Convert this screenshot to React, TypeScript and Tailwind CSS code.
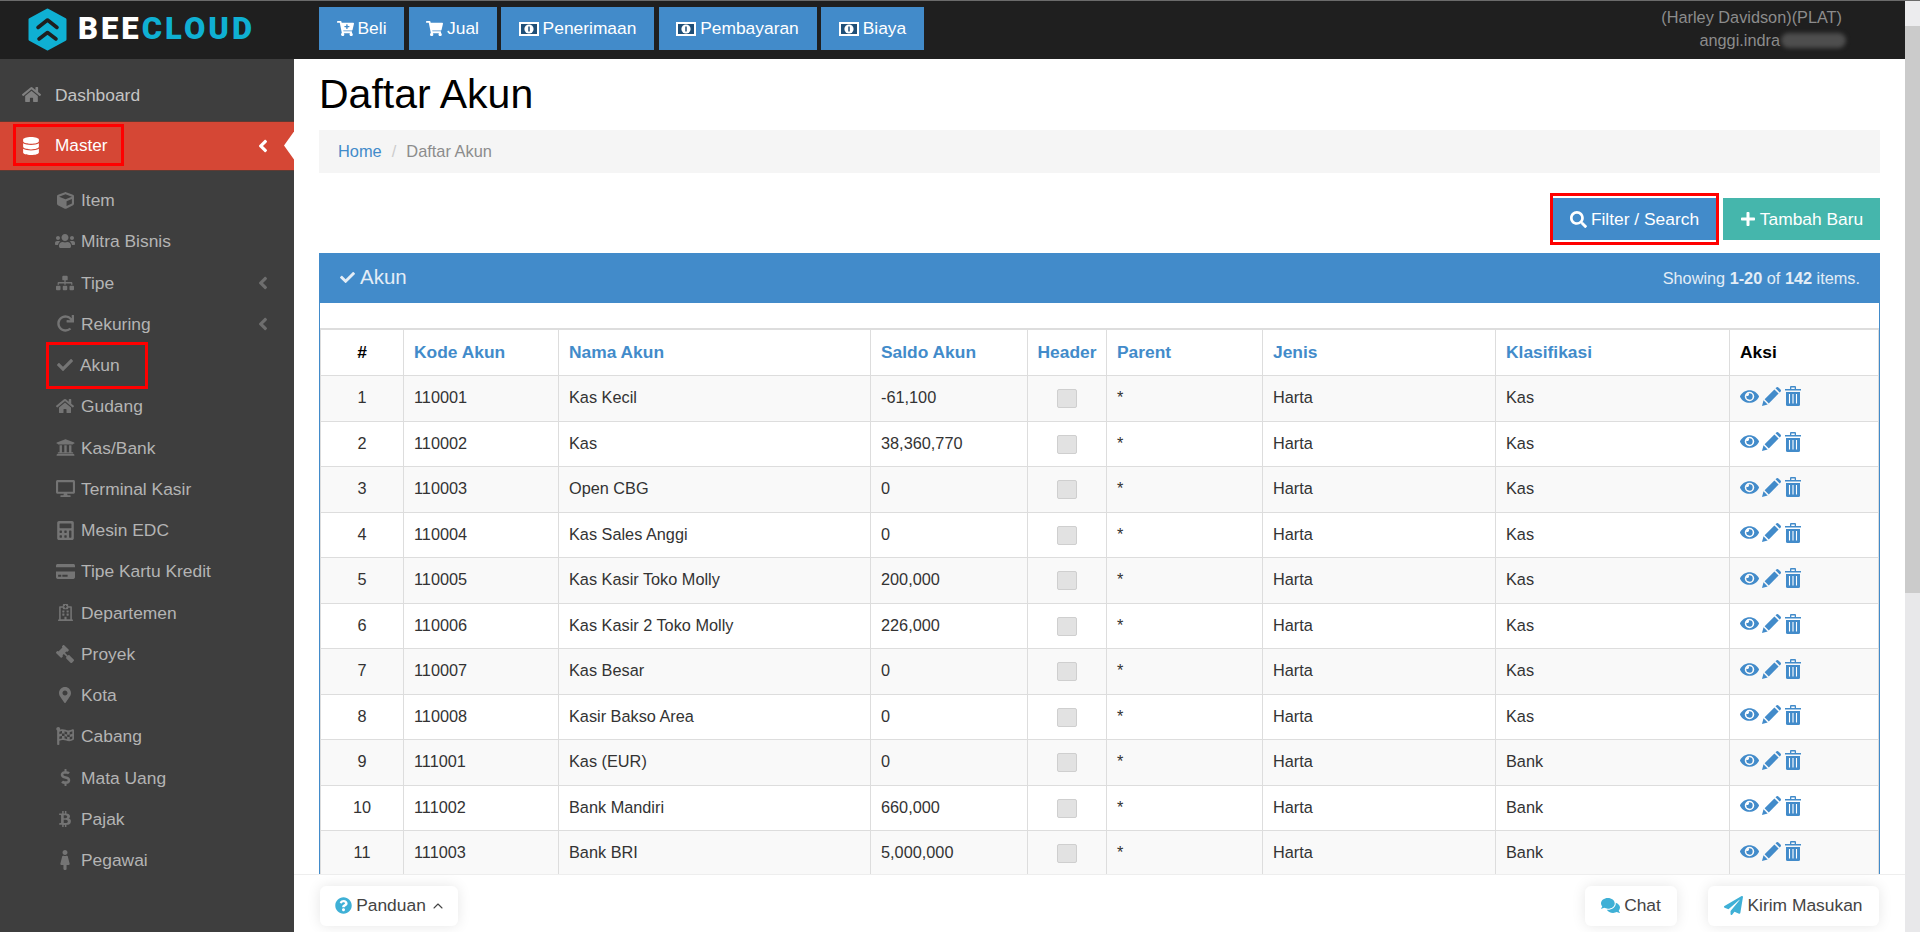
import React from "react";
import {
  FaHome, FaDatabase, FaCube, FaUsers, FaSitemap, FaRedo, FaCheck, FaUniversity, FaDesktop, FaCalculator,
  FaCreditCard, FaRegHospital, FaGavel, FaMapMarkerAlt, FaFlagCheckered, FaDollarSign, FaBtc, FaFemale,
  FaEye, FaCartPlus, FaShoppingCart, FaSearch, FaPlus, FaQuestionCircle,
  FaComments, FaPaperPlane, FaAngleLeft,
} from "react-icons/fa";
import { ChevronUp } from "lucide-react";

const Logo = () => (
  <svg width="39" height="43" viewBox="0 0 39 43" className="shrink-0">
    <path d="M19.5 2 L37 11.5 V31.5 L19.5 41 L2 31.5 V11.5 Z" fill="#0fb0d3" stroke="#0fb0d3" strokeWidth="3" strokeLinejoin="round" />
    <path d="M10 19.5 L19.5 12 L29 19.5" fill="none" stroke="#1f1f1f" strokeWidth="3.6" strokeLinecap="round" strokeLinejoin="round" />
    <path d="M11 31 L19.5 24.5 L28 31" fill="none" stroke="#1f1f1f" strokeWidth="3.6" strokeLinecap="round" strokeLinejoin="round" />
  </svg>
);

const Trash = () => (
  <svg width="16" height="20" viewBox="0 0 16 20">
    <path d="M0 3h5V1a1 1 0 0 1 1-1h4a1 1 0 0 1 1 1v2h5v1.6H0zM6.3 3h3.4V1.4H6.3z" fill="#428bca" fillRule="evenodd" />
    <path d="M1 6h14v12.5a1.5 1.5 0 0 1-1.5 1.5h-11A1.5 1.5 0 0 1 1 18.5z" fill="#428bca" />
    <path d="M4.5 8v9.5M8 8v9.5M11.500 8v9.5" stroke="#fff" strokeWidth="1.1" />
  </svg>
);

const Pencil = () => (
  <svg width="19" height="19" viewBox="0 0 19 19" fill="#428bca">
    <path d="M0 19 L1.5 13.300 L5.700 17.500 Z" />
    <path d="M2.600 12.200 L12.400 2.400 L16.600 6.600 L6.800 16.400 Z" />
    <path d="M13.500 1.300 L14.300 0.500 a1.500 1.500 0 0 1 2.100 0 L18.500 2.600 a1.500 1.500 0 0 1 0 2.100 L17.700 5.500 Z" />
  </svg>
);

const Money = () => (
  <svg width="20" height="14" viewBox="0 0 20 14" className="shrink-0">
    <rect x="1" y="1" width="18" height="12" fill="#428bca" stroke="#fff" strokeWidth="2" />
    <rect x="2" y="2" width="16" height="10" fill="#1f4f78" />
    <circle cx="10" cy="7" r="4.600" fill="#fff" />
    <path d="M10 4.500v5" stroke="#1f4f78" strokeWidth="1.500" />
  </svg>
);

const topButtons = [
  { label: "Beli", w: "w-[85px]", icon: <FaCartPlus size={17} /> },
  { label: "Jual", w: "w-[88px]", icon: <FaShoppingCart size={17} /> },
  { label: "Penerimaan", w: "w-[153px]", icon: <Money /> },
  { label: "Pembayaran", w: "w-[158px]", icon: <Money /> },
  { label: "Biaya", w: "w-[103px]", icon: <Money /> },
];

const subItems: { label: string; icon: React.ReactNode; chevron?: boolean; boxed?: boolean }[] = [
  { label: "Item", icon: <FaCube size={17} /> },
  { label: "Mitra Bisnis", icon: <FaUsers size={20} /> },
  { label: "Tipe", chevron: true, icon: <FaSitemap size={18} /> },
  { label: "Rekuring", chevron: true, icon: <FaRedo size={17} /> },
  { label: "Akun", boxed: true, icon: <FaCheck size={16} /> },
  { label: "Gudang", icon: <FaHome size={18} /> },
  { label: "Kas/Bank", icon: <FaUniversity size={19} /> },
  { label: "Terminal Kasir", icon: <FaDesktop size={19} /> },
  { label: "Mesin EDC", icon: <FaCalculator size={19} /> },
  { label: "Tipe Kartu Kredit", icon: <FaCreditCard size={19} /> },
  { label: "Departemen", icon: <FaRegHospital size={17} /> },
  { label: "Proyek", icon: <FaGavel size={18} className="-scale-x-100" /> },
  { label: "Kota", icon: <FaMapMarkerAlt size={16} /> },
  { label: "Cabang", icon: <FaFlagCheckered size={18} /> },
  { label: "Mata Uang", icon: <FaDollarSign size={17} /> },
  { label: "Pajak", icon: <FaBtc size={16} /> },
  { label: "Pegawai", icon: <FaFemale size={20} /> },
];

const rows = [
  ["1", "110001", "Kas Kecil", "-61,100", "Kas"],
  ["2", "110002", "Kas", "38,360,770", "Kas"],
  ["3", "110003", "Open CBG", "0", "Kas"],
  ["4", "110004", "Kas Sales Anggi", "0", "Kas"],
  ["5", "110005", "Kas Kasir Toko Molly", "200,000", "Kas"],
  ["6", "110006", "Kas Kasir 2 Toko Molly", "226,000", "Kas"],
  ["7", "110007", "Kas Besar", "0", "Kas"],
  ["8", "110008", "Kasir Bakso Area", "0", "Kas"],
  ["9", "111001", "Kas (EUR)", "0", "Bank"],
  ["10", "111002", "Bank Mandiri", "660,000", "Bank"],
  ["11", "111003", "Bank BRI", "5,000,000", "Bank"],
];

const th = "border border-[#ddd] border-t-2 px-[10px] text-left text-[17.4px] font-bold text-[#428bca] h-[46.5px]";
const td = "border border-[#ddd] px-[10px] pb-[2px] h-[45.5px] text-[16.3px] text-[#333]";

export default function App() {
  return (
    <div className="flex h-screen w-full flex-col overflow-hidden bg-white font-['Liberation_Sans',Arial,sans-serif]">
      <div className="h-px shrink-0 bg-[#6b6b6b]" />
      <div className="flex min-h-0 flex-1">
        <div className="flex min-w-0 flex-1 flex-col">
          {/* Header */}
          <header className="flex h-[58px] shrink-0 bg-[#1f1f1f]">
            <div className="flex w-[294px] shrink-0 items-start gap-[11px] pl-[28px] pt-[7px]">
              <Logo />
              <span className="mt-[3px] text-[31px] leading-[36px] font-black tracking-[3px] font-['Roboto',sans-serif]">
                <span className="text-white">BEE</span>
                <span className="text-[#0fb0d3]">CLOUD</span>
              </span>
            </div>
            <div className="ml-[25px] mt-[6px] flex h-[43px] gap-[4.500px]">
              {topButtons.map((b) => (
                <button key={b.label} className={`flex items-center justify-center gap-[4px] bg-[#428bca] text-[17.4px] text-white ${b.w}`}>
                  {b.icon}
                  {b.label}
                </button>
              ))}
            </div>
            <div className="ml-auto pr-[63px] pt-[5px] text-right text-[16.3px] leading-[23px] text-[#8c8c8c]">
              <div>(Harley Davidson)(PLAT)</div>
              <div className="flex items-center justify-end">
                anggi.indra
                <span className="-mr-[4px] ml-[1px] h-[15px] w-[65px] rounded-full bg-[#4e4e4e] blur-[2px]" />
              </div>
            </div>
          </header>

          <div className="flex min-h-0 flex-1">
            {/* Sidebar */}
            <aside className="w-[294px] shrink-0 bg-[#3e3e3e] pt-[11px]">
              <div className="flex h-[50.5px] items-center pb-[1px] text-[17.400px] text-[#c4c4c4]">
                <span className="flex w-[55px] justify-start pl-[22px] text-[#808080]"><FaHome size={19} /></span>
                Dashboard
              </div>
              <div className="relative flex h-[50px] items-center border-y border-[#5f3a32] bg-[#d54735] text-[17.2px] text-white">
                <span className="flex w-[55px] justify-start pl-[22px]"><FaDatabase size={18} /></span>
                Master
                <FaAngleLeft size={20} className="absolute left-[253px] top-[14px]" />
                <div className="absolute right-0 top-[10px] h-[28px] w-[10px] bg-white [clip-path:polygon(100%_0,100%_100%,0_50%)]" />
                <div className="absolute left-[13px] top-[2px] h-[42px] w-[111px] border-[3px] border-[#ff0000]" />
              </div>
              <ul className="pt-[9px]">
                {subItems.map((it) => (
                  <li key={it.label} className="relative flex h-[41.25px] items-center text-[17.4px] text-[#b4b4b4]">
                    <span className="flex w-[81px] justify-start pl-[53px] text-[#747474]">
                      <span className="flex w-[24px] shrink-0 justify-center">{it.icon}</span>
                    </span>
                    <span className={it.boxed ? "-ml-[1px]" : ""}>{it.label}</span>
                    {it.chevron && <FaAngleLeft size={20} className="absolute left-[253px] top-[11px] text-[#6e6e6e]" />}
                    {it.boxed && <div className="absolute left-[46px] top-[-3px] h-[47px] w-[102px] border-[3px] border-[#ff0000]" />}
                  </li>
                ))}
              </ul>
            </aside>

            {/* Main */}
            <main className="flex min-w-0 flex-1 flex-col">
              <div className="min-h-0 flex-1 overflow-hidden px-[25px]">
                <h1 className="flex h-[71px] items-center text-[41px] font-normal text-black">Daftar Akun</h1>
                <nav className="flex h-[43px] items-center gap-[10px] bg-[#f5f5f5] px-[19px] text-[16.4px]">
                  <span className="text-[#428bca]">Home</span>
                  <span className="text-[#ccc]">/</span>
                  <span className="text-[#8c8c8c]">Daftar Akun</span>
                </nav>
                <div className="mt-[25px] flex justify-end gap-[7px]">
                  <button className="relative flex h-[42px] w-[163px] items-center justify-center gap-[4px] bg-[#428bca] text-[17.4px] text-white">
                    <FaSearch size={17} />
                    Filter / Search
                    <span className="absolute -inset-x-[3px] -inset-y-[5px] border-[3px] border-[#ff0000]" />
                  </button>
                  <button className="flex h-[42px] w-[157px] items-center justify-center gap-[4px] bg-[#45b6ac] text-[17.4px] text-white">
                    <FaPlus size={16} />
                    Tambah Baru
                  </button>
                </div>
                <section className="mt-[13px] border-x border-[#428bca]">
                  <div className="-mx-px flex h-[50px] items-center justify-between bg-[#428bca] pl-[21px] pr-[20px] text-[#e3edf6]">
                    <span className="-mt-[1px] flex items-center gap-[5px] text-[20.5px]"><FaCheck size={15} />Akun</span>
                    <span className="text-[16.3px]">Showing <b>1-20</b> of <b>142</b> items.</span>
                  </div>
                  <div className="pt-[25px]">
                    <table className="w-[1558px] table-fixed border-collapse">
                      <colgroup>
                        <col className="w-[83px]" />
                        <col className="w-[155px]" />
                        <col className="w-[312px]" />
                        <col className="w-[157px]" />
                        <col className="w-[79px]" />
                        <col className="w-[156px]" />
                        <col className="w-[233px]" />
                        <col className="w-[234px]" />
                        <col className="w-[149px]" />
                      </colgroup>
                      <thead>
                        <tr>
                          <th className={`${th} !text-center !text-black`}>#</th>
                          <th className={th}>Kode Akun</th>
                          <th className={th}>Nama Akun</th>
                          <th className={th}>Saldo Akun</th>
                          <th className={`${th} !px-0 !text-center`}>Header</th>
                          <th className={th}>Parent</th>
                          <th className={th}>Jenis</th>
                          <th className={th}>Klasifikasi</th>
                          <th className={`${th} !text-black`}>Aksi</th>
                        </tr>
                      </thead>
                      <tbody>
                        {rows.map((r, i) => (
                          <tr key={r[0]} className={i % 2 === 0 ? "bg-[#f9f9f9]" : "bg-white"}>
                            <td className={`${td} text-center`}>{r[0]}</td>
                            <td className={td}>{r[1]}</td>
                            <td className={td}>{r[2]}</td>
                            <td className={td}>{r[3]}</td>
                            <td className={`${td} !px-0`}>
                              <input type="checkbox" disabled className="mx-auto mt-[3px] block h-[19px] w-[20px] appearance-none rounded-[2px] border border-[#cfcfcf] bg-[#e2e2e2]" />
                            </td>
                            <td className={td}>*</td>
                            <td className={td}>Harta</td>
                            <td className={td}>{r[4]}</td>
                            <td className={td}>
                              <div className="-mt-[2px] flex items-center text-[#428bca]">
                                <FaEye size={19} className="mr-[3px]" />
                                <span className="mr-[4px]"><Pencil /></span>
                                <Trash />
                              </div>
                            </td>
                          </tr>
                        ))}
                      </tbody>
                    </table>
                  </div>
                </section>
              </div>

              {/* Footer */}
              <footer className="flex h-[58px] shrink-0 items-start border-t border-[#eee] bg-white px-[26px] pt-[11px] text-[17.4px] text-[#444]">
                <button className="flex h-[40px] w-[138px] items-center justify-center gap-[4px] rounded-[6px] bg-white pb-[1px] pl-[3px] shadow-[0_0_14px_rgba(0,0,0,0.1)]">
                  <FaQuestionCircle size={17} className="text-[#3fb0d6]" />
                  Panduan
                  <ChevronUp size={16} strokeWidth={1.6} />
                </button>
                <button className="ml-auto flex h-[40px] w-[92px] items-center justify-center gap-[4px] rounded-[6px] bg-white pb-[1px] shadow-[0_0_14px_rgba(0,0,0,0.1)]">
                  <FaComments size={19} className="text-[#3fb0d6]" />
                  Chat
                </button>
                <button className="ml-[31px] flex h-[40px] w-[171px] items-center justify-center gap-[4px] rounded-[6px] bg-white pb-[1px] shadow-[0_0_14px_rgba(0,0,0,0.1)]">
                  <FaPaperPlane size={19} className="text-[#3fb0d6]" />
                  Kirim Masukan
                </button>
              </footer>
            </main>
          </div>
        </div>

        {/* Scrollbar */}
        <div className="flex w-[15px] shrink-0 flex-col bg-[#e8e8ea]">
          <div className="h-[25px] bg-[#ececee]" />
          <div className="h-[567px] bg-[#cbcbcb]" />
        </div>
      </div>
    </div>
  );
}
